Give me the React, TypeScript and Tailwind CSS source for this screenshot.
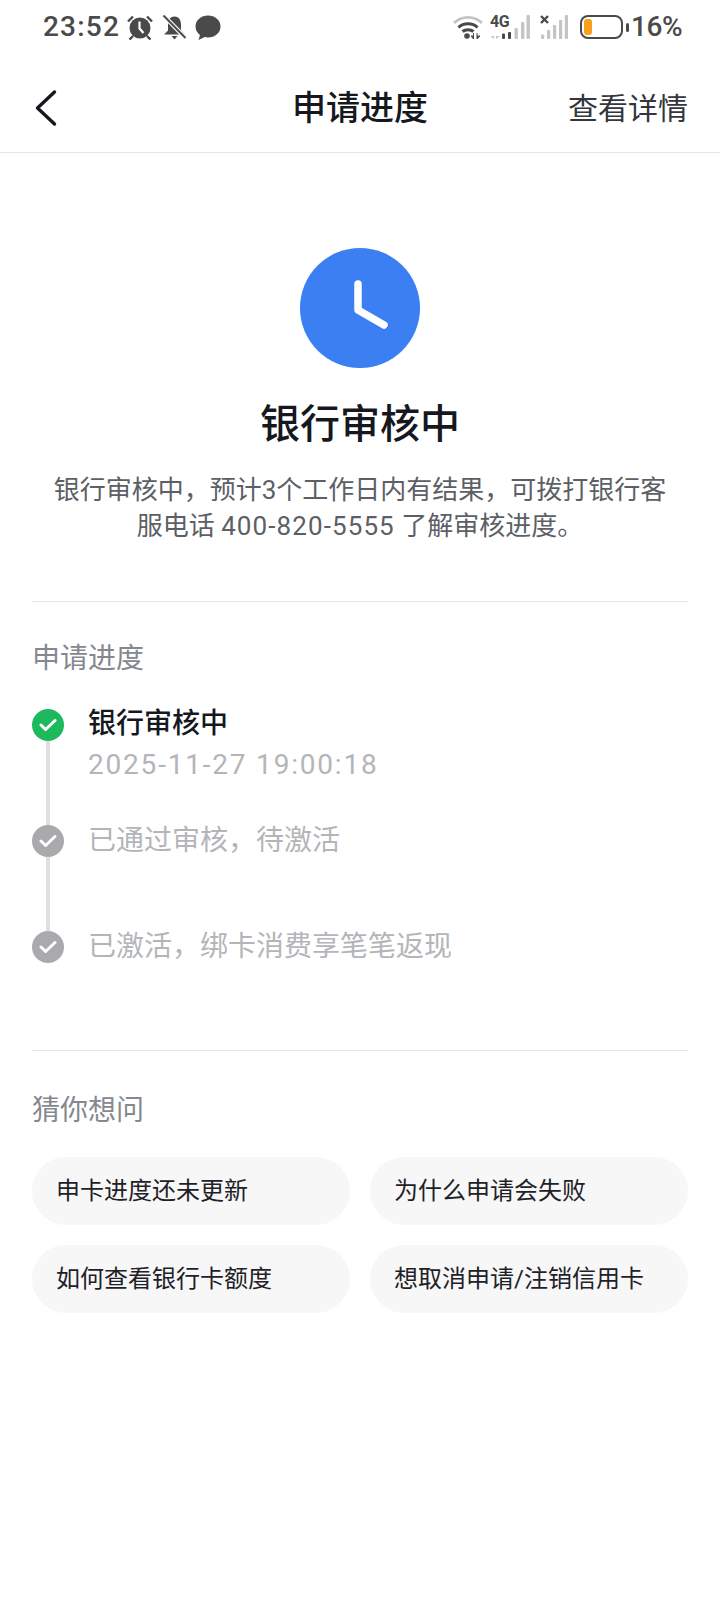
import React from 'react';

const fontStack = 'font-["Roboto","Noto_Sans_CJK_SC",sans-serif]';

function CheckDot({ color }: { color: string }) {
  return (
    <div className={`w-8 h-8 rounded-full flex items-center justify-center shrink-0 ${color}`}>
      <svg width="18" height="14" viewBox="0 0 18 14" fill="none">
        <path d="M2 7L6.6 11.5L16 2.5" stroke="white" strokeWidth="3" strokeLinecap="round" strokeLinejoin="round" />
      </svg>
    </div>
  );
}

function StatusBar() {
  return (
    <div className="h-[54px] flex items-center justify-between pl-[43px] pr-[38px] text-[#4a4a4a]">
      <div className="flex items-center">
        <span className="text-[28px] font-medium tracking-[1.2px] leading-none">23:52</span>
        <svg className="ml-[7px]" width="26" height="25" viewBox="0 0 26 25" fill="#4a4a4a">
          <circle cx="13" cy="13" r="10.5" />
          <path d="M1 6.5L6 1.5M25 6.5L20 1.5M6 21L2.5 24.5M20 21L23.5 24.5" stroke="#4a4a4a" strokeWidth="2.4" fill="none" />
          <path d="M12.5 6.5V13.5L16.5 18" stroke="white" strokeWidth="2.2" fill="none" />
        </svg>
        <svg className="ml-[9px]" width="25" height="25" viewBox="0 0 25 25" fill="#4a4a4a">
          <path d="M12.5 1.5C7.5 1.5 6 6 6 9.5V15.5L2 19.5H23L19 15.5V9.5C19 6 17.5 1.5 12.5 1.5Z" />
          <path d="M9.5 21H15.5L12.5 24.5Z" />
          <path d="M1.5 0.5L23.5 23" stroke="white" strokeWidth="4.4" />
          <path d="M1.5 0.5L23.5 23" stroke="#4a4a4a" strokeWidth="2" />
        </svg>
        <svg className="ml-[8px]" width="26" height="25" viewBox="0 0 26 25" fill="#4a4a4a">
          <path d="M13 0.5C6 0.5 0.5 5.2 0.5 11.5C0.5 15 2.2 18 5 20L3.5 25L9.8 22.1C10.8 22.4 11.9 22.5 13 22.5C20 22.5 25.5 17.8 25.5 11.5C25.5 5.2 20 0.5 13 0.5Z" />
        </svg>
      </div>
      <div className="flex items-center">
        <svg width="30" height="24" viewBox="0 0 30 24" fill="none">
          <path d="M1 8C8.5 0.5 21.5 0.5 29 8" stroke="#c4c4c4" strokeWidth="2.8" />
          <path d="M5.5 12.5C10.5 7.5 19.5 7.5 24.5 12.5" stroke="#4a4a4a" strokeWidth="3" />
          <path d="M9.5 16.5C12.5 14 17.5 14 20.5 16.5" stroke="#4a4a4a" strokeWidth="3" />
          <circle cx="14" cy="21" r="2.8" fill="#4a4a4a" />
          <path d="M20.5 18V24L18 21H20.5M24 18V24L27 21H24" fill="#4a4a4a" stroke="#4a4a4a" strokeWidth="1" />
        </svg>
        <div className="ml-[7px] w-[40px] h-[24px] relative">
          <span className="absolute left-0 top-[-2px] text-[16px] font-bold leading-[18px] tracking-[-0.5px]">4G</span>
          <svg className="absolute left-0 top-0" width="40" height="24" viewBox="0 0 40 24" fill="none">
            <path d="M4 18V24L0.5 21H4M6 18V24L9.5 21H6" fill="#c4c4c4" />
            <rect x="12" y="18.5" width="3" height="5.5" rx="1" fill="#4a4a4a" />
            <rect x="18" y="17" width="3" height="7" rx="1" fill="#4a4a4a" />
            <rect x="24.5" y="13" width="3.4" height="11" rx="1" fill="#c4c4c4" />
            <rect x="31" y="7" width="3.4" height="17" rx="1" fill="#c4c4c4" />
            <rect x="36.5" y="0" width="3.4" height="24" rx="1" fill="#c4c4c4" />
          </svg>
        </div>
        <div className="ml-[10px] w-[28px] h-[24px]">
          <svg width="28" height="24" viewBox="0 0 28 24" fill="none">
            <path d="M1 1L8 8M8 1L1 8" stroke="#4a4a4a" strokeWidth="2.4" />
            <rect x="1" y="19.5" width="3.2" height="4.5" rx="1" fill="#c4c4c4" />
            <rect x="7" y="15" width="3.2" height="9" rx="1" fill="#c4c4c4" />
            <rect x="13" y="10" width="3.2" height="14" rx="1" fill="#c4c4c4" />
            <rect x="19" y="5" width="3.2" height="19" rx="1" fill="#c4c4c4" />
            <rect x="24.8" y="0" width="3.2" height="24" rx="1" fill="#c4c4c4" />
          </svg>
        </div>
        <div className="ml-[12px] flex items-center">
          <div className="w-[43px] h-[24px] rounded-[8px] border-[2px] border-[#4a4a4a] p-[2px]">
            <div className="w-[8px] h-full rounded-[3px] bg-[#f7a01e]" />
          </div>
          <div className="ml-[3px] w-[3px] h-[9px] rounded-full bg-[#4a4a4a]" />
        </div>
        <span className="ml-[2px] text-[28px] font-medium tracking-[-0.5px] leading-none">16%</span>
      </div>
    </div>
  );
}

export default function App() {
  return (
    <div className={`w-[720px] min-h-[1612px] bg-white ${fontStack}`}>
      <StatusBar />

      {/* nav */}
      <div className="h-[99px] grid grid-cols-[1fr_auto_1fr] items-center border-b border-[#e5e5e5] pt-[10px] px-[32px]">
        <svg width="26" height="38" viewBox="0 0 26 38" fill="none">
          <path d="M22.5 3L5.5 19L22.5 35" stroke="#15181e" strokeWidth="3.4" strokeLinecap="round" strokeLinejoin="round" />
        </svg>
        <span className="text-[34px] font-medium text-[#15181e]">申请进度</span>
        <span className="justify-self-end text-[30px] text-[#33363c]">查看详情</span>
      </div>

      {/* status */}
      <div className="flex flex-col items-center pt-[95px]">
        <div className="w-[120px] h-[120px] rounded-full bg-[#3b7ff3] flex items-center justify-center">
          <svg width="120" height="120" viewBox="0 0 120 120" fill="none">
            <path d="M58 36V62L84 77" stroke="white" strokeWidth="7.5" strokeLinecap="round" strokeLinejoin="round" />
          </svg>
        </div>
        <h1 className="mt-[29px] text-[40px] leading-[56px] font-medium text-[#15181e]">银行审核中</h1>
        <p className="mt-[19px] w-[620px] text-center text-[26px] leading-[36px] text-[#5c5f66]">
          银行审核中，预计3个工作日内有结果，可拨打银行客<br />
          服电话 <span className="tracking-[1.1px]">400-820-5555</span> 了解审核进度。
        </p>
      </div>

      {/* progress */}
      <div className="mx-[32px] mt-[57px] border-t border-[#e5e5e5] pt-[37px]">
        <div className="text-[28px] leading-[40px] text-[#85888f]">申请进度</div>
        <div className="mt-[30px] flex">
          <div className="flex flex-col items-center w-[32px]">
            <CheckDot color="bg-[#1cba5c]" />
            <div className="w-[4px] h-[84px] bg-[#e0e0e0]" />
            <CheckDot color="bg-[#a9a9ae]" />
            <div className="w-[4px] h-[74px] bg-[#e0e0e0]" />
            <CheckDot color="bg-[#a9a9ae]" />
          </div>
          <div className="ml-[24px] flex flex-col -mt-[3px]">
            <div className="text-[28px] leading-[36px] font-medium text-[#15181e]">银行审核中</div>
            <div className="mt-[5px] text-[28px] leading-[36px] tracking-[1.8px] text-[#b4b5b9]">2025-11-27 19:00:18</div>
            <div className="mt-[40px] text-[28px] leading-[36px] text-[#b4b5b9]">已通过审核，待激活</div>
            <div className="mt-[70px] text-[28px] leading-[36px] text-[#b4b5b9]">已激活，绑卡消费享笔笔返现</div>
          </div>
        </div>
      </div>

      {/* faq */}
      <div className="mx-[32px] mt-[85px] border-t border-[#e5e5e5] pt-[40px]">
        <div className="text-[28px] leading-[40px] text-[#85888f]">猜你想问</div>
        <div className="mt-[26px] grid grid-cols-2 gap-[20px]">
          {['申卡进度还未更新', '为什么申请会失败', '如何查看银行卡额度', '想取消申请/注销信用卡'].map((q) => (
            <div key={q} className="h-[68px] rounded-full bg-[#f7f7f7] flex items-center pl-[24px] text-[24px] text-[#1e2127]">
              {q}
            </div>
          ))}
        </div>
      </div>
    </div>
  );
}
